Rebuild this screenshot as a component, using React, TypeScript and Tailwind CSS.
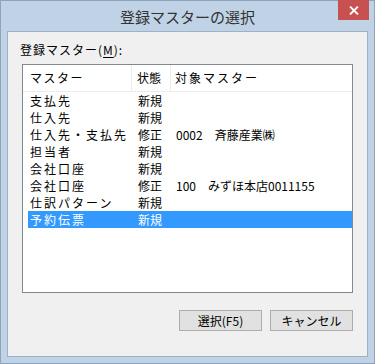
const rows = [
  { name: '支払先', state: '新規', target: '' },
  { name: '仕入先', state: '新規', target: '' },
  { name: '仕入先・支払先', state: '修正', target: '0002　斉藤産業㈱' },
  { name: '担当者', state: '新規', target: '' },
  { name: '会社口座', state: '新規', target: '' },
  { name: '会社口座', state: '修正', target: '100　みずほ本店0011155' },
  { name: '仕訳パターン', state: '新規', target: '' },
  { name: '予約伝票', state: '新規', target: '', selected: true },
]

const font = { fontFamily: '"Noto Sans CJK JP", "Liberation Sans", sans-serif' }

export default function App() {
  return (
    <div
      className="w-[375px] h-[364px] bg-[#bfd2e6] border border-[#8ea4bb] flex flex-col text-[12px] text-black"
      style={font}
    >
      {/* title bar */}
      <div className="relative h-[30px] flex items-center justify-center shrink-0">
        <span className="text-[15px] text-[#333] mt-[2px]">登録マスターの選択</span>
        <div className="absolute right-[5px] -top-px w-[31px] h-[20px] bg-[#c75050] flex items-center justify-center">
          <svg width="10" height="9" viewBox="0 0 10 9">
            <path d="M1 0.5 L9 8.5 M9 0.5 L1 8.5" stroke="#fff" strokeWidth="1.8" />
          </svg>
        </div>
      </div>

      {/* client area */}
      <div className="flex-1 mx-[6px] mb-[6px] border border-[#9fb1c4] bg-[#f0f0f0] flex flex-col">
        <div className="pl-[12px] pt-[11px] h-[32px] leading-[14px] tracking-[1px]">
          登録マスター(<span className="underline underline-offset-2">M</span>):
        </div>

        <div className="ml-[14px] w-[331px] h-[229px] border border-[#828790] bg-white flex flex-col">
          {/* header */}
          <div className="flex h-[27px] border-b border-[#ececec] shrink-0">
            <div className="w-[109px] pl-[7px] flex items-center border-r border-[#ececec] tracking-[1.5px]">
              マスター
            </div>
            <div className="w-[39px] pl-[5px] flex items-center border-r border-[#ececec]">状態</div>
            <div className="flex-1 pl-[4px] flex items-center tracking-[2px]">対象マスター</div>
          </div>
          {/* rows */}
          <div className="flex flex-col">
            {rows.map((r, i) => (
              <div
                key={i}
                className={
                  'flex h-[17px] items-center ml-[5px] ' +
                  (r.selected ? 'bg-[#3399ff] text-white' : '')
                }
              >
                <div className="w-[105px] pl-[2px] tracking-[2px] whitespace-nowrap">{r.name}</div>
                <div className="w-[39px] pl-[5px]">{r.state}</div>
                <div className="flex-1 pl-[4px] whitespace-nowrap">{r.target}</div>
              </div>
            ))}
          </div>
        </div>

        <div className="flex justify-end gap-[8px] pr-[14px] mt-[17px]">
          <button className="w-[83px] h-[21px] bg-[#e1e1e1] border border-[#adadad] flex items-center justify-center text-[12px]">
            選択(F5)
          </button>
          <button className="w-[83px] h-[21px] bg-[#e1e1e1] border border-[#adadad] flex items-center justify-center text-[12px]">
            キャンセル
          </button>
        </div>
      </div>
    </div>
  )
}
